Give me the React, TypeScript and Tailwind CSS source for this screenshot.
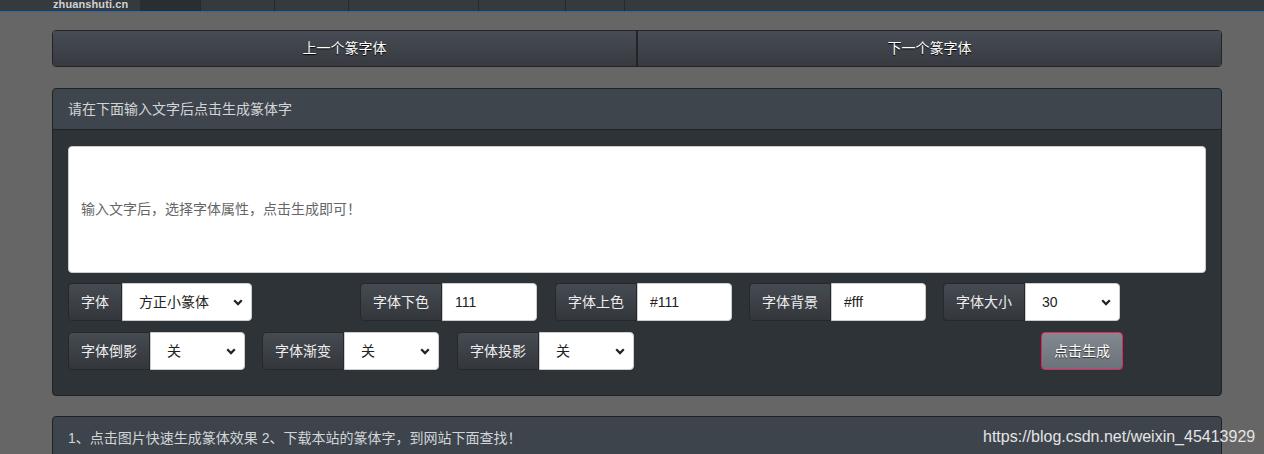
const FONT = "font-['Liberation_Sans','Noto_Sans_CJK_SC',sans-serif]";

function Chevron() {
  return (
    <svg width="10" height="7" viewBox="0 0 10 7" className="shrink-0">
      <path d="M1.2 1.3 L5 5.1 L8.8 1.3" fill="none" stroke="#222" strokeWidth="2.2" />
    </svg>
  );
}

function Label({ text }: { text: string }) {
  return (
    <span className="flex h-full items-center whitespace-nowrap rounded-l-[4px] border border-[#25282c] bg-gradient-to-b from-[#464b52] to-[#33373c] px-3 text-[14px] text-[#eeeeee]">
      {text}
    </span>
  );
}

function SelectGroup({ label, value, width }: { label: string; value: string; width: string }) {
  return (
    <div className={`flex h-[38px] ${width}`}>
      <Label text={label} />
      <div className="flex flex-1 items-center justify-between rounded-r-[4px] border border-[#cccccc] bg-white pl-4 pr-[8px] text-[14px] text-[#222]">
        <span>{value}</span>
        <Chevron />
      </div>
    </div>
  );
}

function InputGroup({ label, value }: { label: string; value: string }) {
  return (
    <div className="flex h-[38px] w-[177px]">
      <Label text={label} />
      <div className="flex flex-1 items-center rounded-r-[4px] border border-[#cccccc] bg-white px-3 text-[14px] text-[#222]">
        {value}
      </div>
    </div>
  );
}

export default function App() {
  const navSeps = [74, 74, 130, 87, 59];
  return (
    <div className={`relative h-[454px] w-[1264px] overflow-hidden bg-[#666666] ${FONT}`}>
      {/* top nav */}
      <div className="flex h-[12px] border-b border-[#1f6fb2] bg-[#363a3f]">
        <div className="flex w-[140px] items-end pl-[53px]">
          <span className="mb-[1px] text-[11px] font-bold leading-none tracking-[0.1px] text-[#cfd2d6]">zhuanshuti.cn</span>
        </div>
        <div className="w-[60px] bg-[#2a2d31]" />
        {navSeps.map((w, i) => (
          <div key={i} style={{ width: w }} className="border-l border-[#26292d]" />
        ))}
        <div className="flex-1 border-l border-[#26292d]" />
      </div>

      <div className="ml-[52px] w-[1170px]">
        {/* prev / next */}
        <div className="mt-[18px] flex h-[37px] overflow-hidden rounded-[4px] border border-[#222428]">
          <button className="flex-1 border-r-2 border-[#222428] bg-gradient-to-b from-[#474c55] to-[#373a3f] text-[14px] text-white [text-shadow:0_1px_1px_#000]">
            上一个篆字体
          </button>
          <button className="flex-1 bg-gradient-to-b from-[#474c55] to-[#373a3f] text-[14px] text-white [text-shadow:0_1px_1px_#000]">
            下一个篆字体
          </button>
        </div>

        {/* main panel */}
        <div className="mt-[21px] overflow-hidden rounded-[4px] border border-[#1f2226] bg-[#2e3338]">
          <div className="flex h-[41px] items-center border-b border-[#1f2226] bg-[#3f454d] px-[15px] text-[14px] text-[#d2d5d8]">
            请在下面输入文字后点击生成篆体字
          </div>
          <div className="px-[15px] pb-[25px] pt-[16px]">
            <div className="flex h-[127px] items-center rounded-[4px] border border-[#cccccc] bg-white px-[12px] text-[14px] text-[#666666]">
              输入文字后，选择字体属性，点击生成即可！
            </div>
            <div className="mt-[10px] flex">
              <div className="w-[292px]">
                <SelectGroup label="字体" value="方正小篆体" width="w-[184px]" />
              </div>
              <div className="w-[195px]">
                <InputGroup label="字体下色" value="111" />
              </div>
              <div className="w-[194px]">
                <InputGroup label="字体上色" value="#111" />
              </div>
              <div className="w-[194px]">
                <InputGroup label="字体背景" value="#fff" />
              </div>
              <div>
                <SelectGroup label="字体大小" value="30" width="w-[177px]" />
              </div>
            </div>
            <div className="mt-[11px] flex">
              <div className="w-[194px]">
                <SelectGroup label="字体倒影" value="关" width="w-[177px]" />
              </div>
              <div className="w-[195px]">
                <SelectGroup label="字体渐变" value="关" width="w-[177px]" />
              </div>
              <div className="w-[584px]">
                <SelectGroup label="字体投影" value="关" width="w-[177px]" />
              </div>
              <button className="h-[38px] w-[82px] rounded-[4px] border border-[#e8245f] bg-gradient-to-b from-[#828990] to-[#6b7279] text-[14px] text-white [text-shadow:0_1px_1px_#333]">
                点击生成
              </button>
            </div>
          </div>
        </div>

        {/* tips panel */}
        <div className="mt-[20px] h-[60px] rounded-[4px] border border-[#1f2226] bg-[#3e444c]">
          <div className="flex h-[42px] items-center px-[15px] text-[14px] text-[#d2d5d8]">
            1、点击图片快速生成篆体效果 2、下载本站的篆体字，到网站下面查找！
          </div>
        </div>
      </div>

      <span className="absolute left-[983px] top-[425px] font-['Liberation_Sans',sans-serif] text-[16px] text-[#e4e4e4]">
        https://blog.csdn.net/weixin_45413929
      </span>
    </div>
  );
}
